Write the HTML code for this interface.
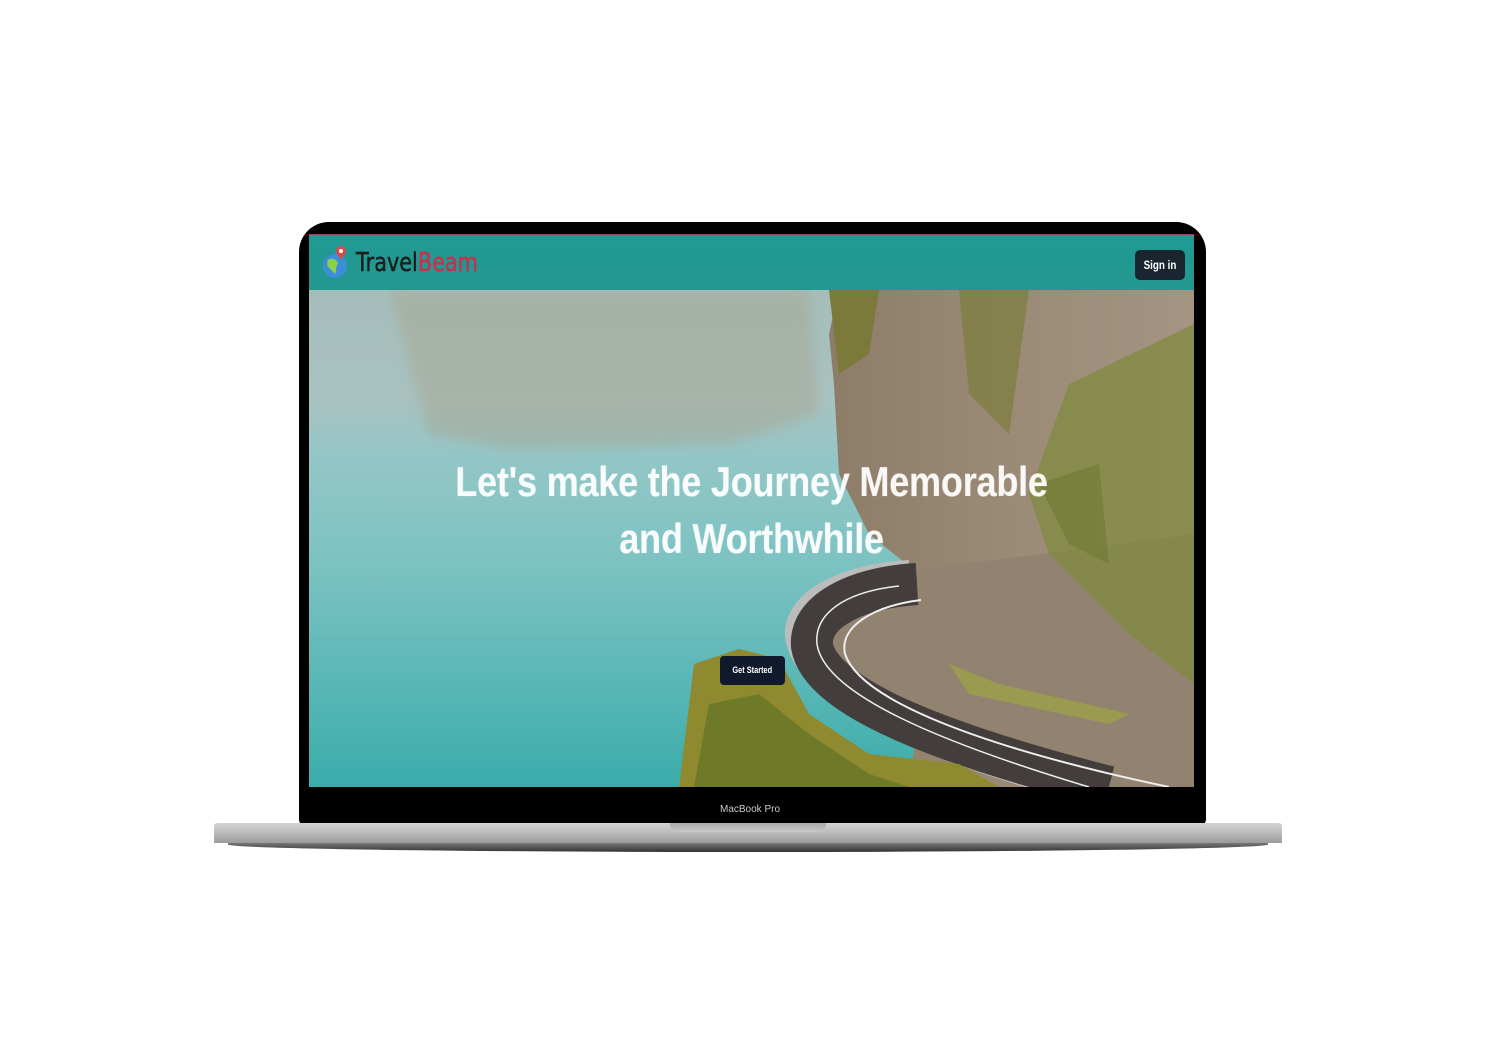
<!DOCTYPE html>
<html><head><meta charset="utf-8"><style>
*{margin:0;padding:0;box-sizing:border-box}
body{width:1500px;height:1038px;background:#fff;position:relative;overflow:hidden;font-family:"Liberation Sans",sans-serif}
.bezel{position:absolute;left:299px;top:222px;width:907px;height:605px;background:#000;border-radius:30px 30px 8px 8px}
.screen{position:absolute;left:309px;top:234px;width:885px;height:553px;overflow:hidden;background:#3fb3b0}
.nav{position:absolute;left:0;top:0;width:885px;height:56px;background:linear-gradient(#1f9a93,#239890);border-top:1px solid #8a4a50;z-index:3}
.logo{position:absolute;left:47px;top:13px;font-size:26px;color:#1c1c1c;transform:scaleX(0.8);transform-origin:0 0;font-family:"DejaVu Sans","Liberation Sans",sans-serif;-webkit-text-stroke:0.5px currentColor}
.logo span{color:#c8304d}
.signin{position:absolute;left:826px;top:15px;width:50px;height:30px;background:#1a2530;border-radius:5px;color:#fff;font-size:12px;font-weight:bold;text-align:center;line-height:30px}
.signin span,.btn span{display:inline-block;transform:scaleX(0.82)}
.h{position:absolute;left:0;width:885px;text-align:center;color:rgba(255,255,255,0.85);font-weight:bold;font-size:42px;letter-spacing:-0.3px;z-index:2;transform:scaleX(0.86);text-shadow:0 0 1px rgba(255,255,255,0.6)}
.btn{position:absolute;left:411px;top:422px;width:65px;height:29px;background:#111a2c;border-radius:4px;color:#fff;font-size:9px;font-weight:bold;text-align:center;line-height:29px;z-index:2}
.base{position:absolute;left:214px;top:823px;width:1068px;height:20px;background:linear-gradient(#d4d4d4,#b5b5b5 60%,#9a9a9a);border-radius:3px 3px 0 0}
.base2{position:absolute;left:228px;top:843px;width:1040px;height:9px;background:linear-gradient(#777,#333);border-radius:0 0 60% 60%/0 0 100% 100%}
.notch{position:absolute;left:670px;top:823px;width:156px;height:9px;background:linear-gradient(#aaa,#c8c8c8);border-radius:0 0 8px 8px}
.mbp{position:absolute;left:0;width:1500px;top:804px;text-align:center;color:#ccc;font-size:10px}
</style></head><body>
<div class="bezel"></div>
<div class="screen">
 <svg width="885" height="553" style="position:absolute;left:0;top:0">
  <defs>
   <linearGradient id="w" x1="0" y1="0" x2="0" y2="1"><stop offset="0" stop-color="#a4bcb8"/><stop offset="0.3" stop-color="#a8c2c0"/><stop offset="0.4" stop-color="#94c6c6"/><stop offset="0.6" stop-color="#7cc2c2"/><stop offset="1" stop-color="#3aadab"/></linearGradient>
   <linearGradient id="c" x1="0" y1="0" x2="1" y2="0"><stop offset="0" stop-color="#8c7c68"/><stop offset="0.5" stop-color="#9a8a76"/><stop offset="1" stop-color="#a49482"/></linearGradient>
   <filter id="b"><feGaussianBlur stdDeviation="6"/></filter>
  </defs>
  <rect width="885" height="553" fill="url(#w)"/>
  <path d="M80 56 L500 56 L510 180 L420 210 L200 215 L120 200Z" fill="#a89a80" opacity="0.35" filter="url(#b)"/>
  <path d="M530 56 L885 56 L885 553 L600 553 L620 400 L610 340 L560 300 L530 240 L525 150 L520 100Z" fill="url(#c)"/>
  <path d="M615 335 C540 345 505 380 512 420 C535 480 690 530 800 553 L885 553 L885 300Z" fill="#928270"/>
  <path d="M520 56 L570 56 L560 120 L530 140Z" fill="#7b7a3a"/>
  <path d="M650 56 L720 56 L700 200 L660 160Z" fill="#7c7d3c" opacity="0.7"/>
  <path d="M760 150 L885 90 L885 450 L820 400 L740 320 L720 260Z" fill="#7f8a3c" opacity="0.7"/>
  <path d="M730 250 L790 230 L800 330 L760 310Z" fill="#6f7a32" opacity="0.6"/>
  <path d="M640 430 L690 450 L820 480 L800 490 L660 460Z" fill="#9a9a50"/>
  <path d="M600 330 C530 334 478 362 480 402 C486 462 600 515 730 553" stroke="#bcbcbc" stroke-width="8" fill="none"/>
  <path d="M608 350 C545 354 500 378 503 412 C512 465 640 512 800 553" stroke="#433d3c" stroke-width="42" fill="none"/>
  <path d="M590 352 C535 358 505 380 508 410 C515 460 630 508 780 553" stroke="#eee" stroke-width="1.5" fill="none"/>
  <path d="M612 366 C565 372 530 392 536 420 C552 468 680 515 860 553" stroke="#eee" stroke-width="2" fill="none"/>
  <path d="M370 553 L385 430 L430 415 L470 425 L500 480 L560 520 L650 530 L690 553Z" fill="#8f8a30"/>
  <path d="M385 553 L400 470 L450 460 L500 500 L560 540 L600 553Z" fill="#6e7a28"/>
 </svg>
 <div class="nav"><svg style="position:absolute;left:13px;top:9px" width="28" height="38"><circle cx="13" cy="22" r="12" fill="#3a8fd8"/><path d="M6 16 C10 13 16 16 16 20 C13 22 15 28 13 30 C10 26 6 24 5 20Z" fill="#8bd14a"/><circle cx="19" cy="7" r="5" fill="#e04848"/><path d="M15 9 L19 16 L23 9Z" fill="#e04848"/><circle cx="19" cy="7" r="2" fill="#fff"/></svg><div class="logo">Travel<span>Beam</span></div><div class="signin"><span>Sign in</span></div></div>
 <div class="h" style="top:224px">Let's make the Journey Memorable</div>
 <div class="h" style="top:281px">and Worthwhile</div>
 <div class="btn"><span>Get Started</span></div>
</div>
<div class="mbp">MacBook Pro</div>
<div class="base2"></div>
<div class="base"></div>
<div class="notch"></div>
</body></html>
